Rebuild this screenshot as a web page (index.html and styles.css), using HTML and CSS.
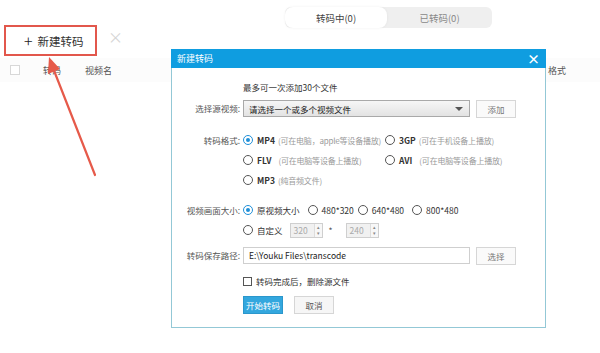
FILE: index.html
```html
<!DOCTYPE html>
<html lang="zh">
<head>
<meta charset="utf-8">
<link rel="stylesheet" href="styles.css">
</head>
<body>
<div class="app">
  <div class="toolbar">
    <div class="new-btn"><span class="plus">+</span>新建转码</div>
    <div class="tb-close">×</div>
    <div class="tabs">
      <div class="tab active">转码中(0)</div>
      <div class="tab">已转码(0)</div>
    </div>
  </div>
  <div class="head-row">
    <span class="hcheck"></span>
    <span class="h-status">转码</span>
    <span class="h-name">视频名</span>
    <span class="h-format">格式</span>
  </div>

  <div class="dialog">
    <div class="dlg-title"><span>新建转码</span><span class="dlg-x">×</span></div>
    <div class="dlg-body">
      <div class="info">最多可一次添加30个文件</div>
      <div class="row row-src">
        <div class="label">选择源视频:</div>
        <div class="select"><span>请选择一个或多个视频文件</span><span class="caret"></span></div>
        <div class="btn">添加</div>
      </div>
      <div class="row row-fmt">
        <div class="label">转码格式:</div>
        <div class="fmt-grid">
          <label class="radio"><span class="dot on"></span><b>MP4</b><i>(可在电脑，apple等设备播放)</i></label>
          <label class="radio"><span class="dot"></span><b>3GP</b><i>(可在手机设备上播放)</i></label>
          <label class="radio"><span class="dot"></span><b>FLV</b><i class="wide">(可在电脑等设备上播放)</i></label>
          <label class="radio"><span class="dot"></span><b>AVI</b><i class="wide">(可在电脑等设备上播放)</i></label>
          <label class="radio"><span class="dot"></span><b>MP3</b><i>(纯音频文件)</i></label>
        </div>
      </div>
      <div class="row row-size">
        <div class="label">视频画面大小:</div>
        <div class="size-col">
          <div class="size-line">
            <label class="radio r1"><span class="dot on"></span>原视频大小</label>
            <label class="radio r2"><span class="dot"></span>480*320</label>
            <label class="radio r3"><span class="dot"></span>640*480</label>
            <label class="radio"><span class="dot"></span>800*480</label>
          </div>
          <div class="size-line custom">
            <label class="radio"><span class="dot"></span>自定义</label>
            <div class="spin"><span>320</span><span class="arrows"><i>▴</i><i>▾</i></span></div>
            <span class="star">*</span>
            <div class="spin"><span>240</span><span class="arrows"><i>▴</i><i>▾</i></span></div>
          </div>
        </div>
      </div>
      <div class="row row-path">
        <div class="label">转码保存路径:</div>
        <div class="input">E:\Youku Files\transcode</div>
        <div class="btn">选择</div>
      </div>
      <div class="row row-del">
        <div class="label"></div>
        <label class="chk"><span class="box"></span>转码完成后，删除源文件</label>
      </div>
      <div class="row row-btns">
        <div class="label"></div>
        <div class="btn primary">开始转码</div>
        <div class="btn cancel">取消</div>
      </div>
    </div>
  </div>

  <svg class="arrow" width="600" height="353" viewBox="0 0 600 353">
    <line x1="95" y1="175" x2="53" y2="68" stroke="#e65a4a" stroke-width="2.2" stroke-linecap="round"/>
    <polygon points="49,57 60,69 48,74" fill="#e65a4a"/>
  </svg>
</div>
</body>
</html>
```

FILE: styles.css
```css
* { box-sizing: border-box; }
html, body { margin: 0; padding: 0; }
body {
  width: 600px;
  height: 353px;
  background: #fff;
  font-family: "Noto Sans CJK SC", "Noto Sans", sans-serif;
  color: #333;
  overflow: hidden;
}
.app { position: relative; width: 600px; height: 353px; }

.toolbar { display: flex; align-items: flex-start; height: 58px; }
.new-btn {
  margin: 25px 0 0 4px;
  width: 93px;
  height: 31px;
  border: 2px solid #e2574c;
  display: flex;
  align-items: center;
  padding-left: 18px;
  font-size: 11.5px;
  color: #333;
  background: #fff;
}
.plus { font-size: 16px; font-weight: 300; margin-right: 5px; line-height: 1; position: relative; top: -1px; color: #222; }
.tb-close { margin: 29px 0 0 11px; font-size: 15px; color: #d5d5d5; line-height: 1; }
.tabs {
  margin: 7px 0 0 162px;
  width: 207px;
  height: 21px;
  display: flex;
  background: #efefef;
  border-radius: 6px;
}
.tab {
  flex: 1;
  font-size: 9.5px;
  color: #888;
  display: flex;
  align-items: center;
  justify-content: center;
}
.tab.active {
  flex: 0 0 102px;
  background: #fff;
  color: #444;
  border-radius: 8px;
  box-shadow: 0 0 3px rgba(0,0,0,0.06);
}

.head-row {
  display: flex;
  align-items: center;
  height: 24px;
  font-size: 9px;
  color: #555;
  background: #fcfcfc;
}
.hcheck { width: 10px; height: 10px; border: 1px solid #d8d8d8; margin-left: 10px; background: #fff; }
.h-status { margin-left: 23px; }
.h-name { margin-left: 24px; }
.h-format { margin-left: auto; margin-right: 34px; }

.dialog {
  position: absolute;
  left: 171px;
  top: 49px;
  width: 375px;
  height: 279px;
  border: 1px solid #93c8d6;
  border-top: none;
  background: #fff;
  font-size: 8.5px;
}
.dlg-title {
  height: 19px;
  margin: 0 -1px;
  background: #0f9de0;
  color: #fff;
  display: flex;
  align-items: center;
  justify-content: space-between;
  padding: 0 6px 0 6px;
  font-size: 9px;
}
.dlg-x { font-size: 13px; font-weight: bold; line-height: 1; }

.dlg-body { padding-top: 13px; }
.info { padding-left: 71px; height: 12px; line-height: 12px; color: #333; }
.row { display: flex; align-items: flex-start; }
.label { width: 68px; text-align: right; margin-right: 3px; color: #555; flex: none; line-height: 17px; }
.row-src { margin-top: 7px; }
.select {
  width: 227px;
  height: 17px;
  border: 1px solid #a9a9a9;
  background: linear-gradient(#f6f6f6, #e3e3e3);
  display: flex;
  align-items: center;
  justify-content: space-between;
  padding: 0 6px 0 5px;
  color: #222;
}
.caret { width: 0; height: 0; border-left: 4px solid transparent; border-right: 4px solid transparent; border-top: 4px solid #555; }
.btn {
  width: 40px;
  height: 18px;
  border: 1px solid #d6d6d6;
  background: #fafafa;
  color: #777;
  display: flex;
  align-items: center;
  justify-content: center;
  margin-left: 6px;
}
.row-fmt { margin-top: 12px; }
.row-fmt .label, .row-size .label { line-height: 20px; }
.fmt-grid { display: grid; grid-template-columns: 142px auto; }
.radio { display: flex; align-items: center; height: 20px; color: #333; white-space: nowrap; }
.radio b { font-weight: 600; color: #333; margin-right: 3px; }
.radio i { font-style: normal; color: #9a9a9a; font-size: 8px; letter-spacing: -0.2px; }
.radio i.wide { margin-left: 4px; }
.dot {
  width: 10px; height: 10px;
  border: 1px solid #555;
  border-radius: 50%;
  margin-right: 4px;
  flex: none;
  position: relative;
}
.dot.on { border-color: #1f8fd8; }
.dot.on::after {
  content: "";
  position: absolute;
  left: 2px; top: 2px;
  width: 4px; height: 4px;
  border-radius: 50%;
  background: #1f8fd8;
}
.row-size { margin-top: 10px; }
.size-line { display: flex; align-items: center; }
.size-line .radio { margin-right: 8px; }
.size-line .r2 { margin-right: 4px; }
.custom .radio { margin-right: 7px; }
.spin {
  width: 33px;
  height: 15px;
  border: 1px solid #cfcfcf;
  background: #f1f1f1;
  color: #aaa;
  display: flex;
  align-items: center;
  justify-content: space-between;
  padding-left: 3px;
}
.arrows { display: flex; flex-direction: column; width: 8px; height: 13px; border-left: 1px solid #ddd; background: #f7f7f7; }
.arrows i { font-style: normal; font-size: 5px; line-height: 6.5px; text-align: center; color: #888; }
.star { margin: 0 13px 0 6px; color: #555; }
.row-path { margin-top: 7px; }
.input {
  width: 227px;
  height: 17px;
  border: 1px solid #cfcfcf;
  padding-left: 5px;
  line-height: 15px;
  color: #222;
}
.row-del { margin-top: 8px; }
.chk { display: flex; align-items: center; height: 16px; color: #333; }
.box { width: 9px; height: 9px; border: 1px solid #555; margin-right: 4px; }
.row-btns { margin-top: 7px; }
.btn.primary {
  margin-left: 0;
  background: #33a7de;
  border-color: #2b97cc;
  color: #fff;
}
.btn.cancel { margin-left: 11px; background: #f6f6f6; color: #555; }

.arrow { position: absolute; left: 0; top: 0; pointer-events: none; }
```
